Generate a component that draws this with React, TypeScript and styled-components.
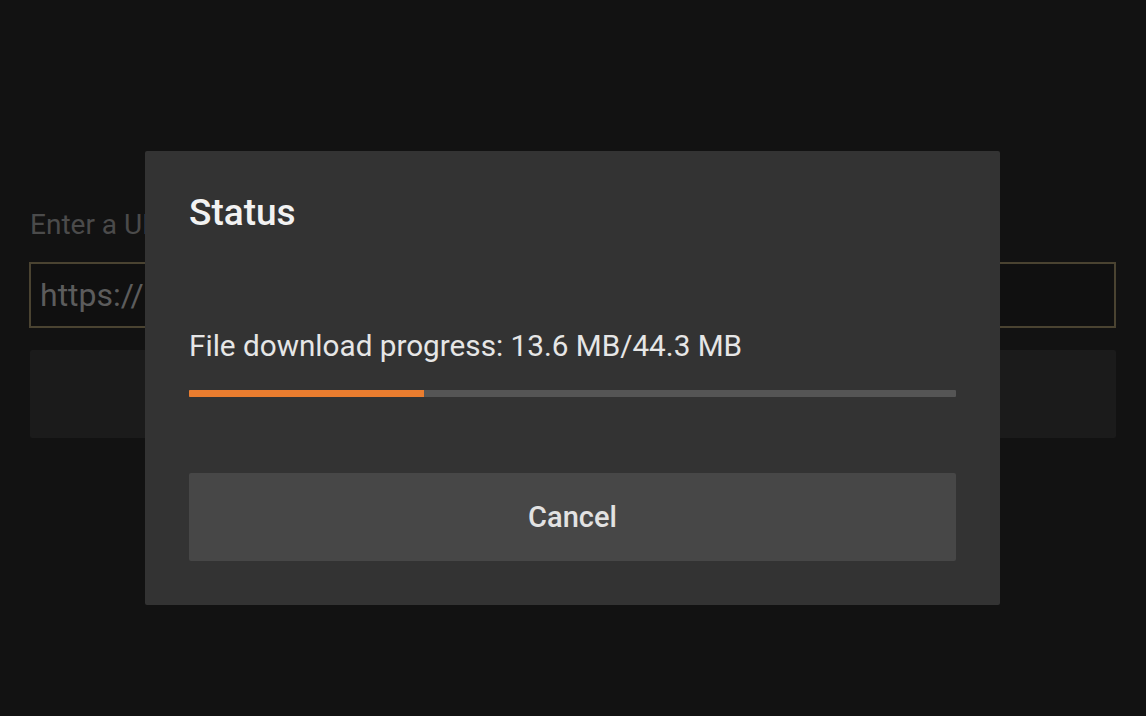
import styled, { createGlobalStyle } from "styled-components";

const GlobalStyle = createGlobalStyle`
  html, body {
    margin: 0;
    padding: 0;
    background: #121212;
    font-family: Roboto, "Noto Sans", sans-serif;
  }
`;

const Page = styled.div`
  width: 1146px;
  height: 716px;
  box-sizing: border-box;
  padding: 206px 30px 0 29px;
  display: flex;
  flex-direction: column;
  overflow: hidden;
  position: relative;
`;

const Label = styled.div`
  font-size: 28px;
  color: #4b4b4b;
  height: 38px;
  line-height: 38px;
  padding-left: 1px;
`;

const UrlInput = styled.div`
  margin-top: 18px;
  height: 66px;
  box-sizing: border-box;
  border: 2px solid #4a4331;
  background: #101010;
  display: flex;
  align-items: center;
  padding-left: 9px;
  font-size: 32px;
  color: #5c5c5c;
`;

const GoButton = styled.div`
  margin-top: 22px;
  margin-left: 1px;
  height: 88px;
  background: #1b1b1b;
  border-radius: 2px;
`;

const Dialog = styled.div`
  position: absolute;
  left: 145px;
  top: 151px;
  width: 855px;
  height: 454px;
  box-sizing: border-box;
  background: #333333;
  border-radius: 2px;
  padding: 42px 44px 0;
  display: flex;
  flex-direction: column;
`;

const Title = styled.div`
  font-size: 37px;
  font-weight: 500;
  color: #f2f2f2;
  height: 40px;
  line-height: 40px;
`;

const Message = styled.div`
  margin-top: 96px;
  font-size: 29.7px;
  color: #e6e6e6;
  height: 34px;
  line-height: 34px;
`;

const Track = styled.div`
  margin-top: 27px;
  height: 7px;
  width: 767px;
  background: #555555;
  border-radius: 1px;
  overflow: hidden;
`;

const Fill = styled.div`
  height: 100%;
  background: #ea7d2f;
`;

const CancelButton = styled.div`
  margin-top: 76px;
  width: 767px;
  height: 88px;
  background: #474747;
  border-radius: 2px;
  display: flex;
  align-items: center;
  justify-content: center;
  font-size: 29px;
  font-weight: 500;
  color: #e2e2e2;
`;

export default function App() {
  const done = 13.6;
  const total = 44.3;
  return (
    <>
      <GlobalStyle />
      <Page>
        <Label>Enter a URL or search term</Label>
        <UrlInput>https://</UrlInput>
        <GoButton />
        <Dialog>
          <Title>Status</Title>
          <Message>
            File download progress: {done} MB/{total} MB
          </Message>
          <Track>
            <Fill style={{ width: `${(done / total) * 100}%` }} />
          </Track>
          <CancelButton>Cancel</CancelButton>
        </Dialog>
      </Page>
    </>
  );
}
